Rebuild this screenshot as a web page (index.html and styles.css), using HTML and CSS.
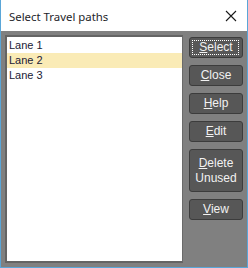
FILE: index.html
```html
<!DOCTYPE html>
<html>
<head>
<meta charset="utf-8">
<link rel="stylesheet" href="styles.css">
</head>
<body>
<div class="window">
  <div class="titlebar">
    <span class="title">Select Travel paths</span>
    <span class="close">
      <svg width="12" height="12" viewBox="0 0 12 12"><path d="M1 1 L11 11 M11 1 L1 11" stroke="#1a1a1a" stroke-width="1.1" fill="none"/></svg>
    </span>
  </div>
  <div class="content">
    <div class="listbox">
      <div class="item">Lane 1</div>
      <div class="item selected">Lane 2</div>
      <div class="item">Lane 3</div>
    </div>
    <div class="buttons">
      <div class="btn focused"><span><u>S</u>elect</span></div>
      <div class="btn"><span><u>C</u>lose</span></div>
      <div class="btn"><span><u>H</u>elp</span></div>
      <div class="btn"><span><u>E</u>dit</span></div>
      <div class="btn tall"><span><u>D</u>elete<br>Unused</span></div>
      <div class="btn"><span><u>V</u>iew</span></div>
    </div>
  </div>
</div>
</body>
</html>
```
FILE: styles.css
```css
html, body {
  margin: 0;
  padding: 0;
  background: #ffffff;
}
.window {
  width: 248px;
  height: 268px;
  box-sizing: border-box;
  border: 1px solid #5aa6d8;
  border-top: none;
  display: flex;
  flex-direction: column;
  background: #808080;
}
.titlebar {
  height: 31px;
  background: #ffffff;
  display: flex;
  align-items: center;
  justify-content: space-between;
  padding: 0 8px 0 8px;
  box-sizing: border-box;
  flex: none;
}
.title {
  font-family: "Noto Sans", sans-serif;
  font-size: 11.4px;
  color: #1e1e2a;
  padding-top: 1px;
}
.close {
  display: flex;
  width: 12px;
  height: 12px;
  margin-right: 2px;
}
.content {
  flex: 1;
  display: flex;
  padding: 4px 3px 4px 4px;
  gap: 6px;
}
.listbox {
  width: 178px;
  box-sizing: border-box;
  background: #ffffff;
  border-top: 2px solid #646464;
  border-left: 2px solid #646464;
  border-right: 1px solid #6a6a6a;
  border-bottom: 2px solid #646464;
  padding-top: 1px;
  font-family: "Liberation Sans", Arial, sans-serif;
  font-size: 11px;
  color: #1a1a36;
}
.item {
  height: 15px;
  line-height: 15px;
  padding-left: 2px;
}
.item.selected {
  background: #faebb6;
}
.buttons {
  width: 54px;
  display: flex;
  flex-direction: column;
  gap: 7px;
  padding-top: 2px;
}
.btn {
  position: relative;
  height: 21px;
  box-sizing: border-box;
  background: #575757;
  border: 1px solid #3c3c3c;
  border-radius: 3px;
  display: flex;
  align-items: center;
  justify-content: center;
  text-align: center;
  font-family: "Liberation Sans", Arial, sans-serif;
  font-size: 12px;
  line-height: 15px;
  color: #f2f2f2;
}
.btn.tall {
  height: 43px;
}
.btn u {
  text-decoration-thickness: 1px;
  text-underline-offset: 1px;
}
.btn.focused::after {
  content: "";
  position: absolute;
  left: 2px;
  right: 3px;
  top: 2px;
  bottom: 2px;
  border: 1px dotted #ffffff;
}
```
